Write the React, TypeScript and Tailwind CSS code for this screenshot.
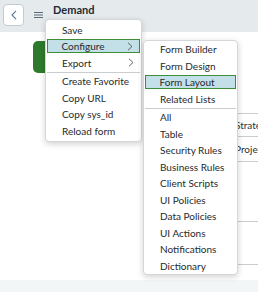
import { ReactNode } from "react";

const MAIN_ITEMS: (string | null)[] = ["Save", "Configure", "Export", null, "Create Favorite", "Copy URL", "Copy sys_id", "Reload form"];
const HAS_SUB = ["Configure", "Export"];

const SUB_ITEMS: (string | null)[] = [
  "Form Builder",
  "Form Design",
  "Form Layout",
  "Related Lists",
  null,
  "All",
  "Table",
  "Security Rules",
  "Business Rules",
  "Client Scripts",
  "UI Policies",
  "Data Policies",
  "UI Actions",
  "Notifications",
  "Dictionary",
];

function Chevron() {
  return (
    <svg width="6" height="9" viewBox="0 0 6 9" fill="none" className="ml-auto mr-[6px]">
      <path d="M1 0.8 L5 4.5 L1 8.2" stroke="#555" strokeWidth="0.9" />
    </svg>
  );
}

function MenuRow({ label, active, arrow }: { label: string; active?: boolean; arrow?: boolean }) {
  return (
    <div className="h-[16.5px] flex items-center px-px">
      <div
        className={
          active
            ? "h-[14px] w-full flex items-center border-[1.5px] border-[#3d8c37] bg-[#c3dfe8] pl-[13.5px]"
            : "h-[14px] w-full flex items-center pl-[15px]"
        }
      >
        <span>{label}</span>
        {arrow && <Chevron />}
      </div>
    </div>
  );
}

function Menu({ items, active, className }: { items: (string | null)[]; active: string; className: string }) {
  const rows: ReactNode[] = items.map((it, i) =>
    it === null ? (
      <div key={i} className="h-[2px] flex items-center px-px">
        <div className="h-px w-full bg-[#c9cdd0]" />
      </div>
    ) : (
      <MenuRow key={i} label={it} active={it === active} arrow={HAS_SUB.includes(it) && items === MAIN_ITEMS} />
    ),
  );
  return (
    <div
      className={
        "absolute rounded-[4px] border border-[#d3d7da] bg-white shadow-[0_2px_6px_rgba(0,0,0,0.18)] text-[10px] leading-none text-[#262a2e] " +
        className
      }
    >
      {rows}
    </div>
  );
}

export default function App() {
  return (
    <div className="relative w-[258px] h-[292px] overflow-hidden bg-white font-['Lato','Noto_Sans',sans-serif] flex flex-col">
      <header className="h-[32px] shrink-0 bg-[#e5eaed] flex items-start">
        <button
          type="button"
          className="ml-[3px] mt-[4px] w-[21px] h-[22px] rounded-[4px] border border-[#c4cbd0] bg-white flex items-center justify-center"
        >
          <svg width="6" height="10" viewBox="0 0 6 10" fill="none">
            <path d="M5 0.8 L1 5 L5 9.2" stroke="#5b7895" strokeWidth="1.1" />
          </svg>
        </button>
        <svg width="9" height="6" viewBox="0 0 9 6" className="ml-[10px] mt-[12px]">
          <rect x="0" y="0" width="9" height="1" fill="#5a6b78" />
          <rect x="0" y="2.5" width="9" height="1" fill="#5a6b78" />
          <rect x="0" y="5" width="9" height="1" fill="#5a6b78" />
        </svg>
        <div className="ml-[10px] mt-[3px] text-[11px] leading-[13px] text-[#1e2a33]">
          <div className="font-bold">Demand</div>
          <div className="font-bold">Management</div>
        </div>
      </header>

      <main className="flex-1 flex">
        <div className="w-[200px] shrink-0">
          <div className="ml-[33px] mt-[9px] w-[60px] h-[32px] rounded-l-[5px] bg-[#2e7a2c]" />
        </div>
        <div className="flex-1 flex flex-col pt-[81px] text-[10px] text-[#2f3337]">
          <div className="h-[24px] border-y border-[#c9cdd0] flex items-center pl-[35px]">Strategic</div>
          <div className="h-[25px] border-b border-[#c9cdd0] flex items-center pl-[35px]">Project</div>
          <div className="h-[60px] border-b border-[#c9cdd0]" />
          <div className="h-[43px] border-b border-[#c9cdd0]" />
        </div>
      </main>
      <div className="h-[12px] shrink-0 bg-[#f2f6f7]" />

      <Menu items={MAIN_ITEMS} active="Configure" className="left-[45px] top-[19px] w-[97px] pt-[1.5px] pb-[1.5px]" />
      <Menu items={SUB_ITEMS} active="Form Layout" className="left-[143px] top-[40px] w-[95px] pb-[0px]" />
    </div>
  );
}
